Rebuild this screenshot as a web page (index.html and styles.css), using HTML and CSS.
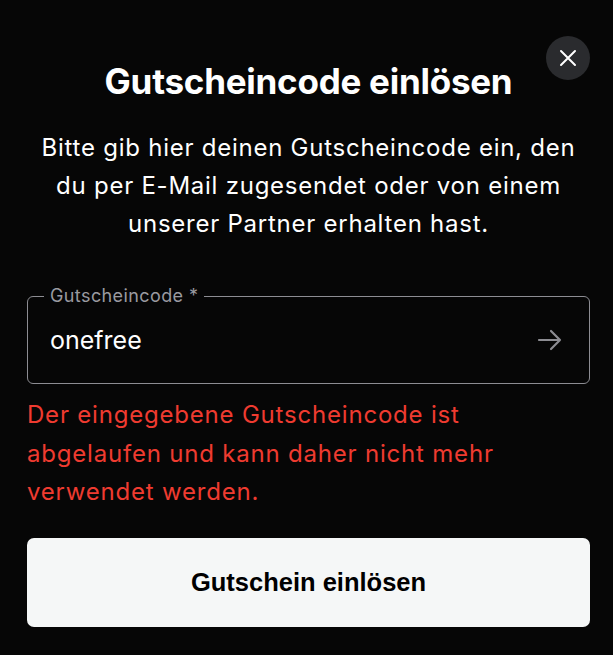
FILE: index.html
```html
<!DOCTYPE html>
<html lang="de">
<head>
<meta charset="utf-8">
<link rel="stylesheet" href="styles.css">
</head>
<body>
<div class="modal">
  <button class="close" aria-label="Schließen">
    <svg width="20" height="20" viewBox="0 0 20 20"><path d="M3 3 L17 17 M17 3 L3 17" stroke="#fff" stroke-width="2" stroke-linecap="round"/></svg>
  </button>
  <h1 class="title">Gutscheincode einlösen</h1>
  <p class="desc">Bitte gib hier deinen Gutscheincode ein, den du per E-Mail zugesendet oder von einem unserer Partner erhalten hast.</p>
  <fieldset class="field">
    <legend class="legend">Gutscheincode *</legend>
    <div class="field-row">
      <span class="value">onefree</span>
      <svg class="arrow" width="26" height="24" viewBox="0 0 26 24"><path d="M2 12 H23 M14 3 L23 12 L14 21" fill="none" stroke="#8c8c92" stroke-width="2.2" stroke-linecap="round" stroke-linejoin="round"/></svg>
    </div>
  </fieldset>
  <p class="error">Der eingegebene Gutscheincode ist abgelaufen und kann daher nicht mehr verwendet werden.</p>
  <button class="submit">Gutschein einlösen</button>
</div>
</body>
</html>
```
FILE: styles.css
```css
html, body {
  margin: 0;
  padding: 0;
  background: #060606;
  height: 100%;
}
.modal {
  position: relative;
  padding: 56px 23px 0 27px;
  font-family: Inter, "Noto Sans", sans-serif;
  color: #fff;
  display: flex;
  flex-direction: column;
}
.close {
  position: absolute;
  top: 36px;
  right: 23px;
  width: 44px;
  height: 44px;
  border-radius: 50%;
  border: none;
  background: #2a2b2e;
  display: flex;
  align-items: center;
  justify-content: center;
  padding: 0;
}
.title {
  margin: 0;
  text-align: center;
  font-size: 35px;
  font-weight: 700;
  line-height: 50px;
  letter-spacing: -0.25px;
}
.desc {
  margin: 23px 0 0;
  text-align: center;
  font-size: 24px;
  line-height: 38px;
  letter-spacing: 0.75px;
}
.field {
  margin: 43px 0 0;
  border: 1px solid #8c8c92;
  border-radius: 6px;
  padding: 0 22px 0 22px;
  min-width: 0;
  height: 98px;
  box-sizing: border-box;
}
.legend {
  padding: 0 6px;
  margin-left: -6px;
  color: #9a9aa0;
  font-size: 18px;
  line-height: 20px;
  letter-spacing: 0.4px;
}
.field-row {
  display: flex;
  align-items: center;
  justify-content: space-between;
  height: 68px;
}
.value {
  font-size: 25px;
}
.arrow {
  display: block;
  margin-right: 4px;
}
.error {
  margin: 12px 0 0;
  padding-right: 20px;
  color: #ef3b30;
  font-size: 24px;
  line-height: 38.5px;
  letter-spacing: 0.8px;
}
.submit {
  margin-top: 26px;
  height: 89px;
  border: none;
  border-radius: 7px;
  background: #f5f7f7;
  color: #000;
  font-family: "Liberation Sans", Arial, sans-serif;
  font-weight: 700;
  font-size: 25.5px;
}
```
